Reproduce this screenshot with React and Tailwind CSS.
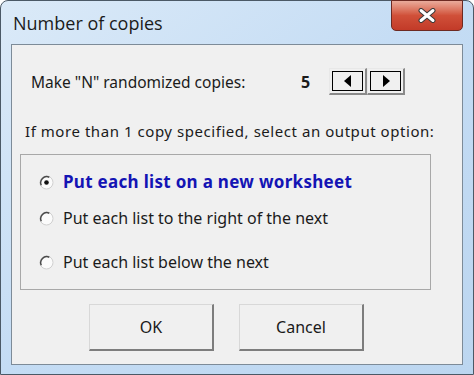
import React from 'react'

const font = { fontFamily: '"Noto Sans", "Liberation Sans", Arial, sans-serif' }

function Radio({ checked }) {
  return (
    <svg width="15" height="15" viewBox="0 0 15 15" className="shrink-0">
      <circle cx="7.5" cy="7.5" r="6.5" fill="#fbfbfb" stroke="#d0d0d0" strokeWidth="1" />
      <path d="M2.3 10.3 A6 6 0 0 1 10.3 2.3" fill="none" stroke="#4a4a4a" strokeWidth="1.5" />
      {checked && <circle cx="7.5" cy="7.5" r="2.3" fill="#111" />}
    </svg>
  )
}

function SpinButton({ dir }) {
  return (
    <div className="w-[38px] h-[27px] bg-[#f0f0f0] border-t border-l border-t-[#e8e8e8] border-l-[#e8e8e8] border-r-2 border-b-2 border-r-[#8a8a8a] border-b-[#8a8a8a] p-[2px]">
      <div className="w-full h-full border border-black flex items-center justify-center">
        <svg width="8" height="12" viewBox="0 0 8 12">
          {dir === 'left' ? <path d="M7 0 L0 6 L7 12 Z" fill="#000" /> : <path d="M1 0 L8 6 L1 12 Z" fill="#000" />}
        </svg>
      </div>
    </div>
  )
}

function DlgButton({ children }) {
  return (
    <button className="w-[125px] h-[47px] bg-[#f0f0f0] border-t border-l border-t-[#d8d8d8] border-l-[#d8d8d8] border-r-2 border-b-2 border-r-[#7d7d7d] border-b-[#7d7d7d] text-[16px] text-[#1a1a1a] flex items-center justify-center">
      {children}
    </button>
  )
}

export default function App() {
  return (
    <div className="w-[474px] h-[375px] bg-white" style={font}>
      <div className="w-full h-full flex flex-col rounded-t-[8px] border border-[#4b5966] bg-gradient-to-br from-[#dbeaf8] via-[#c4dcf4] to-[#bcd6f0]">
        {/* Title bar */}
        <div className="h-[43px] flex items-start justify-between pl-[12px] pr-[10px]">
          <span className="mt-[10px] text-[18px] leading-[24px] text-[#1b1b1b]" style={{ fontFamily: '"Open Sans", "Noto Sans", sans-serif' }}>
            Number of copies
          </span>
          <div className="-mt-px w-[72px] h-[31px] rounded-b-[5px] border border-[#6d2a22] bg-gradient-to-b from-[#e9ab9b] via-[#d05039] to-[#c23a28] flex items-center justify-center">
            <svg width="20" height="15" viewBox="0 0 20 15">
              <path d="M4 2.5 L16 12.5 M16 2.5 L4 12.5" stroke="#3a3a3a" strokeWidth="5" strokeLinecap="round" />
              <path d="M4 2.5 L16 12.5 M16 2.5 L4 12.5" stroke="#ffffff" strokeWidth="3" strokeLinecap="round" />
            </svg>
          </div>
        </div>

        {/* Client area */}
        <div className="flex-1 mx-[10px] mb-[9px] border border-[#7d8b98] bg-[#f0f0f0] flex flex-col">
          <div className="mt-[22px] h-[29px] flex items-center">
            <span className="ml-[19px] w-[270px] text-[15.5px] leading-[20px] text-[#1b1b1b]">Make "N" randomized copies:</span>
            <span className="w-[28px] text-[16px] leading-[20px] font-bold text-[#1b1b1b]">5</span>
            <div className="flex">
              <SpinButton dir="left" />
              <SpinButton dir="right" />
            </div>
          </div>

          <div className="mt-[25px] ml-[13px] text-[15px] leading-[20px] tracking-[0.55px] text-[#1b1b1b] whitespace-nowrap">
            If more than 1 copy specified, select an output option:
          </div>

          <div className="mt-[13px] ml-[8px] w-[411px] h-[136px] border border-[#a8a8a8] flex flex-col pl-[18px]">
            <div className="mt-[15px] h-[24px] flex items-center gap-[9px]">
              <Radio checked />
              <span className="text-[17px] leading-[24px] tracking-[0.3px] font-bold text-[#1414b4]">Put each list on a new worksheet</span>
            </div>
            <div className="mt-[12px] h-[24px] flex items-center gap-[9px]">
              <Radio />
              <span className="text-[16px] leading-[24px] text-[#1b1b1b]">Put each list to the right of the next</span>
            </div>
            <div className="mt-[20px] h-[24px] flex items-center gap-[9px]">
              <Radio />
              <span className="text-[16px] leading-[24px] text-[#1b1b1b]">Put each list below the next</span>
            </div>
          </div>

          <div className="mt-[14px] ml-[77px] flex gap-[25px]">
            <DlgButton>OK</DlgButton>
            <DlgButton>Cancel</DlgButton>
          </div>
        </div>
      </div>
    </div>
  )
}
